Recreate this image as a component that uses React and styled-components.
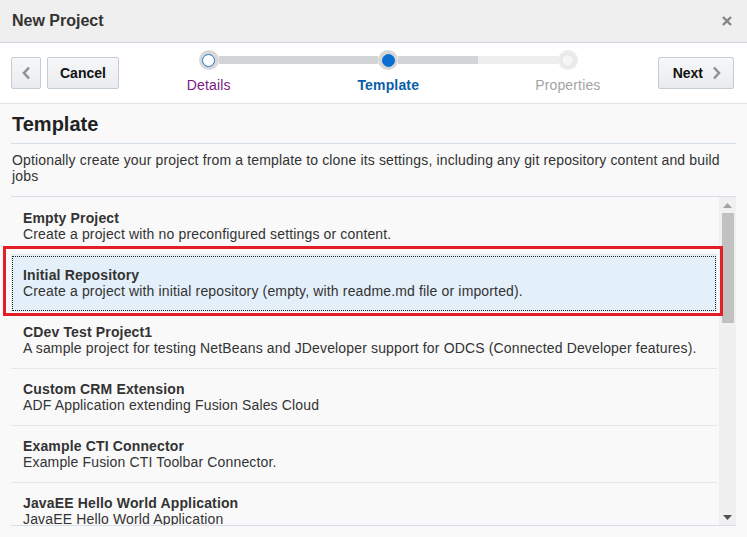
import React from "react";
import styled, { createGlobalStyle } from "styled-components";

const GlobalStyle = createGlobalStyle`
  html, body {
    margin: 0;
    padding: 0;
    background: #f9f9f9;
  }
  body {
    font-family: "Liberation Sans", Arial, sans-serif;
    color: #333;
  }
`;

const Dialog = styled.div`
  width: 747px;
  height: 537px;
  display: flex;
  flex-direction: column;
  background: #f9f9f9;
  overflow: hidden;
`;

const Header = styled.div`
  height: 42px;
  display: flex;
  align-items: center;
  justify-content: space-between;
  padding: 0 14px 0 12px;
  background: #efefef;
  border-bottom: 1px solid #cdd6de;
`;

const Title = styled.div`
  font-size: 16px;
  font-weight: bold;
  color: #333;
`;

const CloseButton = styled.div`
  width: 12px;
  height: 12px;
  display: flex;
`;

const Toolbar = styled.div`
  height: 60px;
  display: flex;
  align-items: flex-start;
  padding: 0 13px 0 11px;
  background: #fff;
  border-bottom: 1px solid #dfe5ea;
`;

const Button = styled.div`
  height: 30px;
  margin-top: 14px;
  display: flex;
  align-items: center;
  justify-content: center;
  gap: 9px;
  padding: ${(p) => (p.$icon ? "0" : p.$wide ? "0 12px 0 14px" : "0 12px")};
  width: ${(p) => (p.$icon ? "28px" : "auto")};
  margin-right: ${(p) => (p.$icon ? "6px" : "0")};
  box-sizing: content-box;
  background: linear-gradient(#f6f7f8, #e9ecef);
  border: 1px solid #c5cdd4;
  border-radius: 2px;
  font-size: 14px;
  font-weight: bold;
  color: #111;
`;

const Stepper = styled.div`
  flex: 1;
  display: grid;
  grid-template-columns: repeat(3, 1fr);
  padding-top: 7px;
`;

const Step = styled.div`
  display: flex;
  flex-direction: column;
  align-items: center;
`;

const TrackRow = styled.div`
  width: 100%;
  display: flex;
  align-items: center;
`;

const Segment = styled.div`
  flex: 1;
  height: 8px;
  background: ${(p) => p.$color};
`;

const Ring = styled.div`
  width: 20px;
  height: 20px;
  border-radius: 50%;
  background: ${(p) => p.$ring};
  display: flex;
  align-items: center;
  justify-content: center;
`;

const Dot = styled.div`
  width: 13px;
  height: 13px;
  box-sizing: border-box;
  border-radius: 50%;
  background: ${(p) => p.$fill};
  border: 1.5px solid ${(p) => p.$border};
`;

const StepLabel = styled.div`
  margin-top: 7px;
  font-size: 14px;
  letter-spacing: 0.15px;
  font-weight: ${(p) => (p.$active ? "bold" : "normal")};
  color: ${(p) => p.$color};
`;

const Content = styled.div`
  flex: 1;
  padding: 0 11px;
  display: flex;
  flex-direction: column;
`;

const Heading = styled.div`
  padding: 9px 1px 7px;
  font-size: 20px;
  line-height: 23px;
  font-weight: bold;
  color: #222;
  border-bottom: 1px solid #d6dfe7;
`;

const Description = styled.div`
  padding: 8px 1px 12px;
  font-size: 14px;
  line-height: 16px;
  letter-spacing: 0.15px;
  color: #333;
  border-bottom: 1px solid #d6dfe7;
`;

const ListWrap = styled.div`
  position: relative;
  height: 328px;
  display: flex;
  border-bottom: 1px solid #d6dfe7;
`;

const Items = styled.div`
  flex: 1;
  overflow: hidden;
  padding-top: 1px;
`;

const Item = styled.div`
  padding: 12px 11px 12px 12px;
  margin-right: 2px;
  font-size: 14px;
  line-height: 16px;
  letter-spacing: 0.15px;
  border-bottom: 1px solid ${(p) => (p.$selected ? "transparent" : "#e6e6e6")};
  background: ${(p) => (p.$selected ? "#e3eff9" : "transparent")};
  outline: ${(p) => (p.$selected ? "1px dotted #222" : "none")};
  outline-offset: -2px;
`;

const ItemTitle = styled.div`
  font-weight: bold;
  color: #333;
`;

const ItemDesc = styled.div`
  color: #333;
`;

const Scrollbar = styled.div`
  width: 17px;
  display: flex;
  flex-direction: column;
  align-items: center;
  background: #f0f0f0;
`;

const Arrow = styled.div`
  height: 16px;
  display: flex;
  align-items: center;
  justify-content: center;
`;

const Thumb = styled.div`
  width: 12px;
  height: 110px;
  background: #c1c1c1;
`;

const Spacer = styled.div`
  flex: 1;
`;

const Highlight = styled.div`
  position: absolute;
  left: -8px;
  top: 49px;
  width: 714px;
  height: 64px;
  border: 3px solid #e31e26;
  pointer-events: none;
`;

const Chevron = ({ dir }) => (
  <svg width="9" height="14" viewBox="0 0 9 14">
    <path
      d={dir === "left" ? "M7 1.5 L2 7 L7 12.5" : "M2 1.5 L7 7 L2 12.5"}
      fill="none"
      stroke="#8c9399"
      strokeWidth="2.6"
    />
  </svg>
);

const templates = [
  { title: "Empty Project", desc: "Create a project with no preconfigured settings or content." },
  {
    title: "Initial Repository",
    desc: "Create a project with initial repository (empty, with readme.md file or imported).",
    selected: true,
  },
  {
    title: "CDev Test Project1",
    desc: "A sample project for testing NetBeans and JDeveloper support for ODCS (Connected Developer features).",
  },
  { title: "Custom CRM Extension", desc: "ADF Application extending Fusion Sales Cloud" },
  { title: "Example CTI Connector", desc: "Example Fusion CTI Toolbar Connector." },
  { title: "JavaEE Hello World Application", desc: "JavaEE Hello World Application" },
];

const steps = [
  { label: "Details", color: "#7b1a82", left: "transparent", right: "#d3d4d6", ring: "#d7d7d7", fill: "#fff", border: "#1a74cf" },
  { label: "Template", color: "#0b5ea8", active: true, left: "#d3d4d6", right: "#d3d4d6", ring: "#d7d7d7", fill: "#0a6fd1", border: "#0a6fd1" },
  { label: "Properties", color: "#a4a4a4", left: "#eeeeee", right: "transparent", ring: "#ebebeb", fill: "#f5f5f5", border: "#e2e2e2" },
];

export default function App() {
  return (
    <>
      <GlobalStyle />
      <Dialog>
        <Header>
          <Title>New Project</Title>
          <CloseButton>
            <svg width="12" height="12" viewBox="0 0 12 12">
              <path d="M2 2 L10 10 M10 2 L2 10" stroke="#858585" strokeWidth="2.4" />
            </svg>
          </CloseButton>
        </Header>
        <Toolbar>
          <Button $icon>
            <Chevron dir="left" />
          </Button>
          <Button>Cancel</Button>
          <Stepper>
            {steps.map((s) => (
              <Step key={s.label}>
                <TrackRow>
                  <Segment $color={s.left} />
                  <Ring $ring={s.ring}>
                    <Dot $fill={s.fill} $border={s.border} />
                  </Ring>
                  <Segment $color={s.right} />
                </TrackRow>
                <StepLabel $color={s.color} $active={s.active}>
                  {s.label}
                </StepLabel>
              </Step>
            ))}
          </Stepper>
          <Button $wide>
            Next
            <Chevron dir="right" />
          </Button>
        </Toolbar>
        <Content>
          <Heading>Template</Heading>
          <Description>
            Optionally create your project from a template to clone its settings, including any git repository
            content and build jobs
          </Description>
          <ListWrap>
            <Items>
              {templates.map((t) => (
                <Item key={t.title} $selected={t.selected}>
                  <ItemTitle>{t.title}</ItemTitle>
                  <ItemDesc>{t.desc}</ItemDesc>
                </Item>
              ))}
            </Items>
            <Scrollbar>
              <Arrow>
                <svg width="9" height="5" viewBox="0 0 9 5">
                  <path d="M0 5 L4.5 0 L9 5 Z" fill="#a3a3a3" />
                </svg>
              </Arrow>
              <Thumb />
              <Spacer />
              <Arrow>
                <svg width="9" height="5" viewBox="0 0 9 5">
                  <path d="M0 0 L9 0 L4.5 5 Z" fill="#505050" />
                </svg>
              </Arrow>
            </Scrollbar>
            <Highlight />
          </ListWrap>
        </Content>
      </Dialog>
    </>
  );
}
